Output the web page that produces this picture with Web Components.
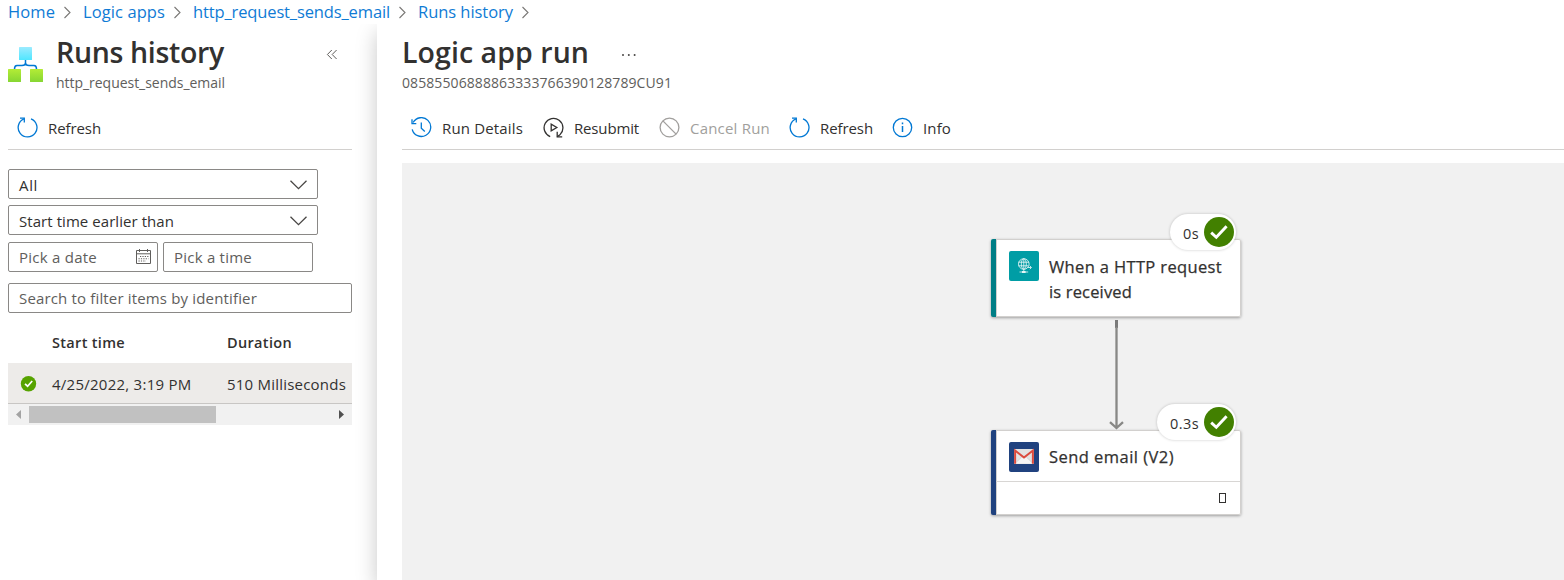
<!DOCTYPE html>
<html lang="en"><head><meta charset="utf-8"><title>Logic app run</title>
<style>html,body{margin:0;height:580px;overflow:hidden;background:#fff;font-family:"Open Sans","Noto Sans",sans-serif;color:#323130}</style></head>
<body><portal-page></portal-page>
<script>
/* Text run that tracks its letters so that it fills the width given in "w". */
class FitText extends HTMLElement{
  connectedCallback(){
    const r=this.shadowRoot||this.attachShadow({mode:'open'});
    r.innerHTML='<style>:host{display:block;white-space:nowrap;flex:none}span{display:inline-block}</style><span><slot></slot></span>';
    const w=+this.getAttribute('w'), s=r.querySelector('span');
    if(w){const n=this.textContent.length; s.style.letterSpacing=((w-s.getBoundingClientRect().width)/n)+'px'; this.style.width=w+'px';}
  }
}
const define=(name,html)=>customElements.define(name,class extends HTMLElement{
  connectedCallback(){
    if(this.shadowRoot)return;
    const r=this.attachShadow({mode:'open'});
    r.innerHTML=typeof html==='function'?html(this):html;
  }
});

const ICONS={
  refresh:['#0078d4','<path d="M6.9 1.9A9.4 9.4 0 1 0 14 1.8"/><path d="M3 1.2H7.3V5.6"/>'],
  history:['#0078d4','<path d="M2.1 5.5A9.4 9.4 0 1 1 1.2 12.3"/><path d="M1 2.2V6.6H5.3M10.3 5.6V11.2L13.8 14.4"/>'],
  resubmit:['#323130','<path d="M7.2 19.6A9.4 9.4 0 1 1 17.2 17.4L14.2 19.8"/><path d="M14.2 14.8V19.8H19.2"/><path d="M8.2 7.2V13.8L13.8 10.5Z"/>'],
  cancel:['#a19f9d','<circle cx="10.5" cy="10.5" r="9.4"/><path d="M3.9 3.9L17.1 17.1"/>'],
  info:['#0078d4','<circle cx="10.5" cy="10.5" r="9.2"/><path d="M10.5 9V15M10.5 5.6V7.2" stroke-width="1.5"/>'],
  chevron:['#484644','<path d="M2.5 6.8L10.5 14.6L18.5 6.8"/>'],
  calendar:['#605e5c','<path d="M3.5 4.5H17.5V17.5H3.5ZM3.5 7.8H17.5M6.5 3V6M14.5 3V6" stroke-width="1"/><path d="M7 10.5H15.5M5.5 12.8H15.5M5.5 15H13" stroke-dasharray="1.2 1.2" stroke-width="1.1"/>'],
  collapse:['#605e5c','<path d="M9.8 6L5.4 10.5L9.8 15M14.6 6L10.2 10.5L14.6 15" stroke-width="1"/>']
};
define('ui-icon',e=>{const [c,p]=ICONS[e.getAttribute('name')];
 return `<style>:host{display:block;width:21px;height:21px;flex:none}svg{display:block}</style><svg width="21" height="21" viewBox="0 0 21 21" fill="none" stroke="${c}" stroke-width="1.3">${p}</svg>`;});

define('bread-crumbs',`<style>:host{display:block}nav{display:flex;height:24px;line-height:24px;padding-left:8px;font-size:16.5px;color:#0f7bd5}
svg{flex:none;display:block}</style>
<nav><fit-text w="47">Home</fit-text><svg width="28" height="24"><path d="M9.5 7L15 12.5L9.5 18" fill="none" stroke="#797775" stroke-width="1.1"/></svg>
<fit-text w="82">Logic apps</fit-text><svg width="28" height="24"><path d="M9.5 7L15 12.5L9.5 18" fill="none" stroke="#797775" stroke-width="1.1"/></svg>
<fit-text w="197">http_request_sends_email</fit-text><svg width="28" height="24"><path d="M9.5 7L15 12.5L9.5 18" fill="none" stroke="#797775" stroke-width="1.1"/></svg>
<fit-text w="95">Runs history</fit-text><svg width="28" height="24"><path d="M9.5 7L15 12.5L9.5 18" fill="none" stroke="#797775" stroke-width="1.1"/></svg></nav>`);

define('blade-title',`<style>:host{display:flex;height:82px;box-sizing:border-box}
.words{display:block}.h{font-weight:600;font-size:28.5px;line-height:38px;height:38px;padding-top:9px}
.s{font-size:14px;line-height:20px;color:#605e5c;padding-top:2px}</style>
<slot name="logo"></slot><div class="words"><div class="h"><slot name="heading"></slot></div><div class="s"><slot name="sub"></slot></div></div><slot name="action"></slot>`);

define('tool-bar',`<style>:host{display:flex;height:43px;border-bottom:1px solid #d2d0ce;padding-left:9px;box-sizing:content-box}</style><slot></slot>`);
define('tool-button',e=>`<style>:host{display:flex;height:43px;font-size:15px}
ui-icon{margin-top:11px}div{line-height:22px;padding-top:11px;margin-left:10px;${e.hasAttribute('disabled')?'color:#a19f9d':''}}</style>
<ui-icon name="${e.getAttribute('icon')}"></ui-icon><div><slot></slot></div>`);

define('ui-field',e=>`<style>:host{display:flex;box-sizing:border-box;height:30px;border:1px solid #8a8886;border-radius:2px;padding:0 ${e.getAttribute('icon')==='calendar'?3:8}px 0 10px;justify-content:space-between;align-items:center;font-size:15px;line-height:28px;padding-top:var(--drop,1px);background:#fff}
ui-icon{margin-top:-1px}</style><slot></slot>${e.hasAttribute('icon')?`<ui-icon name="${e.getAttribute('icon')}"></ui-icon>`:''}`);

define('runs-table',`<style>:host{display:block;font-size:15px}
.r{display:grid;grid-template-columns:44px 175px 125px;align-items:center}
.h{height:40px;font-weight:600;font-size:14.5px;padding-bottom:2px;box-sizing:border-box}.b{height:40px;background:#edebe9;border-bottom:1px solid #c8c6c4}.b fit-text{padding-top:1px}
svg{display:block}.c{margin-left:12px}.bar{display:flex;height:21px;background:#f1f1f1;align-items:center}
.thumb{width:187px;height:17px;background:#c1c1c1;margin-right:115px}</style>
<div class="r h"><span></span><fit-text w="73">Start time</fit-text><fit-text w="65">Duration</fit-text></div>
<div class="r b"><svg class="c" width="17" height="17" viewBox="0 0 17 17"><circle cx="8.5" cy="8.7" r="7.7" fill="#57a300"/><path d="M5 8.8L7.6 11.2L12.2 6" fill="none" stroke="#fff" stroke-width="1.7"/></svg><fit-text w="139.5">4/25/2022, 3:19 PM</fit-text><fit-text w="119">510 Milliseconds</fit-text></div>
<div class="bar"><svg width="21" height="21"><path d="M13 6V15L8 10.5Z" fill="#a3a3a3"/></svg><div class="thumb"></div><svg width="21" height="21"><path d="M8 6V15L13 10.5Z" fill="#505050"/></svg></div>`);

define('runs-blade',`<style>:host{display:block;width:344px;padding:0 25px 0 8px;flex:none}
.logo{width:48px;height:60px}.go{margin:20px 0 0 97px}
.f{display:flex;flex-direction:column;align-items:flex-start;padding-top:19px}
.sel{width:310px;margin-bottom:6px}.two{display:flex;gap:5px;margin:1px 0 11px;--drop:0px}.two ui-field{width:150px}
.q{width:344px;--drop:0px}.g{color:#605e5c}runs-table{margin-top:10px}</style>
<blade-title>
<svg slot="logo" class="logo" viewBox="0 0 48 60"><defs><linearGradient id="a" x2="0" y2="1"><stop stop-color="#9cebff"/><stop offset="1" stop-color="#50e6ff"/></linearGradient><linearGradient id="b" x2="0" y2="1"><stop stop-color="#b4ec36"/><stop offset="1" stop-color="#86d633"/></linearGradient></defs>
<path d="M17.5 36V39Q17.5 41.5 14 41.5H9Q6.5 41.5 6.5 45M17.5 39Q17.5 41.5 21 41.5H26Q28.5 41.5 28.5 45" fill="none" stroke="#0078d4" stroke-width="1.5"/><rect x="11" y="23" width="13" height="13" rx=".6" fill="url(#a)"/><rect y="45" width="13" height="13" rx=".6" fill="url(#b)"/><rect x="22" y="45" width="13" height="13" rx=".6" fill="url(#b)"/></svg>
<fit-text slot="heading" w="168">Runs history</fit-text><fit-text slot="sub" w="169">http_request_sends_email</fit-text><ui-icon slot="action" class="go" name="collapse"></ui-icon></blade-title>
<tool-bar><tool-button icon="refresh"><fit-text w="53">Refresh</fit-text></tool-button></tool-bar>
<div class="f"><ui-field class="sel" icon="chevron"><fit-text w="19">All</fit-text></ui-field>
<ui-field class="sel" icon="chevron"><fit-text w="155">Start time earlier than</fit-text></ui-field>
<div class="two"><ui-field icon="calendar"><fit-text class="g" w="78">Pick a date</fit-text></ui-field><ui-field><fit-text class="g" w="78">Pick a time</fit-text></ui-field></div>
<ui-field class="q"><fit-text class="g" w="238">Search to filter items by identifier</fit-text></ui-field></div>
<runs-table></runs-table>`);

define('flow-card',`<style>:host{display:flex;box-sizing:border-box;width:250px;background:#fff;border-radius:2px;border-left:5px solid var(--accent);box-shadow:0 0 0 1px #d2d0ce inset,0 1px 3px rgba(0,0,0,.35)}
.in{flex:1}.top{display:flex;padding:12px 0 0 13px;gap:10px}.t{font-weight:500;-webkit-text-stroke:.25px #323130;font-size:16.5px;line-height:25px;padding-top:3px}::slotted(svg){display:block;flex:none}</style>
<div class="in"><div class="top"><slot name="icon"></slot><div class="t"><slot></slot></div></div><slot name="foot"></slot></div>`);
define('time-pill',`<style>:host{display:flex;box-sizing:border-box;height:36px;border-radius:18px;background:#fff;justify-content:flex-end;align-items:center;gap:5px;padding-right:2px;font-size:14.5px;box-shadow:0 0 3px rgba(0,0,0,.22)}div{padding-top:2px}svg{display:block}</style>
<div><slot></slot></div><svg width="30" height="30"><circle cx="15" cy="15" r="15" fill="#428000"/><path d="M7.2 15.6L12.3 20.3L22.6 9.3" fill="none" stroke="#fff" stroke-width="2.9"/></svg>`);

define('flow-canvas',`<style>:host{display:block;position:relative;background:#f1f1f1;height:417px;margin-top:13px;overflow:hidden}
flow-card,time-pill,.arrow{position:absolute}
.c1{left:589px;top:76px;height:78px;--accent:#007e86}.c2{left:589px;top:267px;height:85px;--accent:#20427f}
.p1{left:768px;top:51px;width:66px}.p2{left:755px;top:241px;width:79px}.arrow{left:704px;top:156px}
.c2 fit-text{margin-top:-1px}
.foot{display:flex;height:32px;border-top:1px solid #d8d6d4;margin:9px 1px 0 0;justify-content:flex-end;align-items:center}.foot i{width:5px;height:8px;border:1px solid #323130;margin-right:14px}</style>
<svg class="arrow" width="22" height="114"><path d="M10.5 1V9" stroke="#7a7a7a" stroke-width="3"/><path d="M10.5 8V109M4 103.2L10.5 109L17 103.2" fill="none" stroke="#888886" stroke-width="2.3"/></svg>
<flow-card class="c1"><svg slot="icon" width="30" height="30"><rect width="30" height="30" rx="2" fill="#009da5"/><g fill="none" stroke="#fff" stroke-width=".85" opacity=".9"><circle cx="14.8" cy="13" r="5.3"/><ellipse cx="14.8" cy="13" rx="2.5" ry="5.3"/><path d="M9.5 11.2H20M9.5 14.8H19M14.8 7.7V20M10.5 21H19.2M18.5 16.5H22M20.8 14.8L22.5 16.5L20.8 18.2"/><path d="M13 21H16.6" stroke-width="2"/></g></svg><fit-text w="173">When a HTTP request</fit-text><fit-text w="83">is received</fit-text></flow-card>
<flow-card class="c2"><svg slot="icon" width="30" height="30"><rect width="30" height="30" rx="2" fill="#20427f"/><rect x="5" y="7" width="20" height="15" rx="1" fill="#e3e3e3"/><path d="M6 21.5L12.7 15H17.3L24 21.5" fill="#f5f5f5" stroke="#ccc" stroke-width=".7"/><path d="M6.1 21.8V8.5L15 15.5L23.9 8.5V21.8" fill="none" stroke="#dc4b3e" stroke-width="2"/></svg><fit-text w="125">Send email (V2)</fit-text><div slot="foot" class="foot"><i></i></div></flow-card>
<time-pill class="p1"><fit-text w="16">0s</fit-text></time-pill><time-pill class="p2"><fit-text w="29">0.3s</fit-text></time-pill>`);

define('run-blade',`<style>:host{display:block;flex:1;background:#fff;padding-left:25px;box-shadow:0 8px 20px rgba(0,0,0,.22)}
.more{margin:29px 0 0 -51px}
.a{margin-right:20px}.b{margin-right:20px}.c{margin-right:19px}.d{margin-right:19px}</style>
<blade-title><fit-text slot="heading" w="187">Logic app run</fit-text><fit-text slot="sub" w="270">08585506888863333766390128789CU91</fit-text>
<svg slot="action" class="more" width="16" height="4" fill="#484644"><circle cx="2" cy="2" r="1"/><circle cx="7.8" cy="2" r="1"/><circle cx="13.6" cy="2" r="1"/></svg></blade-title>
<tool-bar><tool-button class="a" icon="history"><fit-text w="81">Run Details</fit-text></tool-button><tool-button class="b" icon="resubmit"><fit-text w="65">Resubmit</fit-text></tool-button><tool-button class="c" icon="cancel" disabled><fit-text w="80">Cancel Run</fit-text></tool-button><tool-button class="d" icon="refresh"><fit-text w="53">Refresh</fit-text></tool-button><tool-button icon="info"><fit-text w="28">Info</fit-text></tool-button></tool-bar>
<flow-canvas></flow-canvas>`);

define('portal-page',`<style>:host{display:block;height:580px;overflow:hidden}main{display:flex;height:556px;overflow:hidden}</style><bread-crumbs></bread-crumbs><main><runs-blade></runs-blade><run-blade></run-blade></main>`);
/* Registered last: every style that sizes a text is in place when it is measured. */
customElements.define('fit-text',FitText);
</script></body></html>
